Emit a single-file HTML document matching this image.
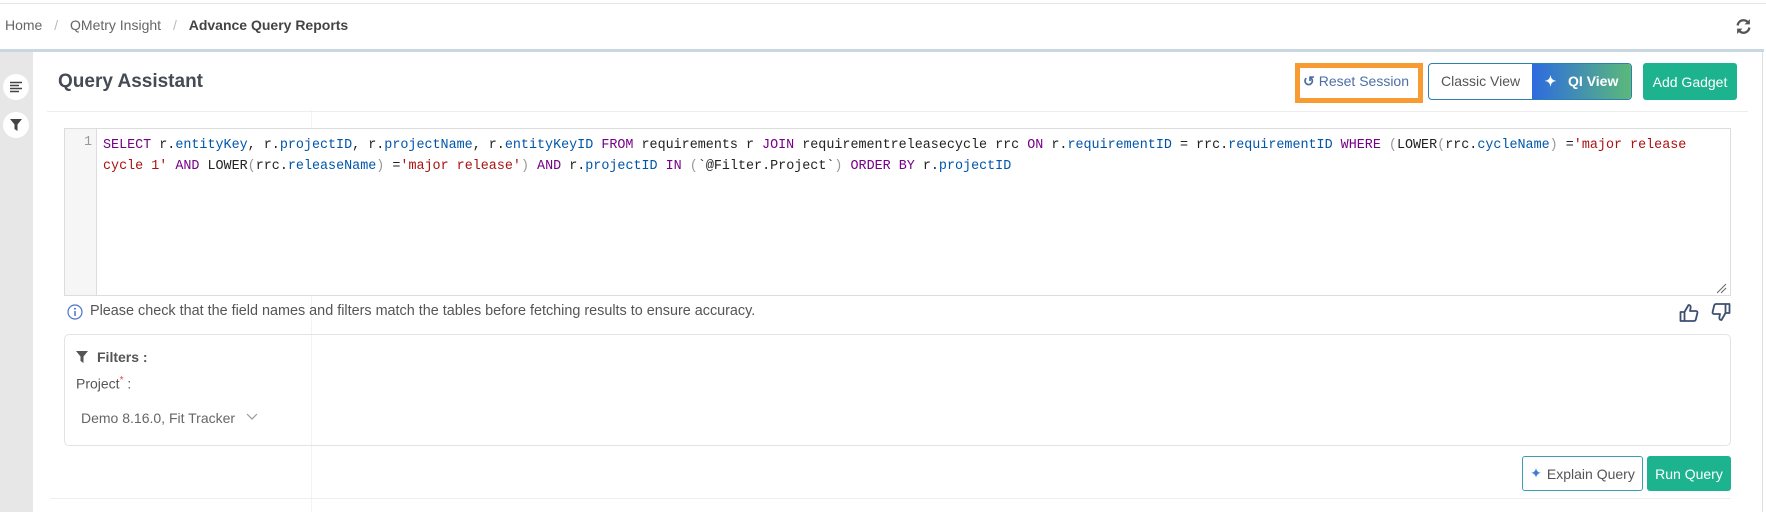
<!DOCTYPE html>
<html><head><meta charset="utf-8"><style>
*{box-sizing:border-box;margin:0;padding:0}
body{width:1766px;height:512px;overflow:hidden;background:#fff;font-family:"Liberation Sans",sans-serif;position:relative;color:#555}
.a{position:absolute;white-space:nowrap}
.mono{font-family:"Liberation Mono",monospace;font-size:13.4px;color:#222}
.k{color:#708}.v{color:#05a}.s{color:#a11}.b{color:#999}
.btn{position:absolute;display:flex;align-items:center;justify-content:center;font-size:14px;border-radius:3px}
</style></head><body>
<div class="a" style="left:0;top:3px;width:1766px;height:1px;background:#e6e6e6"></div>
<div class="a" style="left:5px;top:17px;font-size:14px;color:#666">Home <span style="color:#bbb;margin:0 8px">/</span> QMetry Insight <span style="color:#bbb;margin:0 8px">/</span> <b style="color:#444">Advance Query Reports</b></div>
<svg class="a" style="left:1735px;top:18px" width="17" height="17" viewBox="0 0 16 16"><path d="M2.5 7a5.5 5.5 0 0 1 10-2.5M13.5 9a5.5 5.5 0 0 1-10 2.5" fill="none" stroke="#555" stroke-width="2.2"/><path d="M14 1v5h-5zM2 15v-5h5z" fill="#555"/></svg>
<div class="a" style="left:0;top:49px;width:1764px;height:3px;background:#c9d7e1"></div>
<div class="a" style="left:0;top:52px;width:33px;height:460px;background:#e7e7e7"></div>
<div class="a" style="left:1762px;top:52px;width:1px;height:460px;background:#ddd"></div>
<div class="a" style="left:3px;top:74px;width:26px;height:26px;border-radius:50%;background:#fff"></div>
<svg class="a" style="left:10px;top:81px" width="12" height="12" viewBox="0 0 12 12"><path d="M0 1.5h12M0 4.5h9M0 7.5h12M0 10.5h9" stroke="#444" stroke-width="1.6"/></svg>
<div class="a" style="left:3px;top:112px;width:26px;height:26px;border-radius:50%;background:#fff"></div>
<svg class="a" style="left:10px;top:119px" width="12" height="12" viewBox="0 0 12 12"><path d="M0 0h12L7.5 5.5V12L4.5 10V5.5z" fill="#444"/></svg>
<div class="a" style="left:311px;top:110px;width:1px;height:402px;background:#f3f3f3"></div>
<div class="a" style="left:58px;top:71px;font-size:19px;font-weight:bold;color:#454b54">Query Assistant</div>
<div class="a" style="left:47px;top:111px;width:1701px;height:1px;background:#eee"></div>
<div class="a" style="left:1295px;top:63px;width:128px;height:40px;border:5px solid #f79b32"></div>
<div class="a" style="left:1303px;top:73px;font-size:14px;color:#4d6fa8"><span style="font-weight:bold;margin-right:4px">↺</span>Reset Session</div>
<div class="a" style="left:1428px;top:63px;width:204px;height:37px;border:1px solid #2f7fb0;border-radius:4px"></div>
<div class="a" style="left:1441px;top:73px;font-size:14px;color:#555">Classic View</div>
<div class="btn" style="left:1532px;top:64px;width:99px;height:35px;background:linear-gradient(90deg,#2d6be0,#5bb97a);color:#fff;font-weight:bold;border-radius:0 3px 3px 0">✦&nbsp;&nbsp; QI View</div>
<div class="btn" style="left:1643px;top:63px;width:94px;height:37px;background:#1db38f;color:#fff">Add Gadget</div>
<div class="a" style="left:64px;top:128px;width:1667px;height:168px;border:1px solid #ddd;background:#fff"></div>
<div class="a" style="left:65px;top:129px;width:32px;height:166px;background:#f6f6f6;border-right:1px solid #ddd"></div>
<div class="a mono" style="left:84px;top:135px;color:#999">1</div>
<div class="a mono" style="left:103px;top:135px;line-height:21px"><span class="k">SELECT</span> r.<span class="v">entityKey</span>, r.<span class="v">projectID</span>, r.<span class="v">projectName</span>, r.<span class="v">entityKeyID</span> <span class="k">FROM</span> requirements r <span class="k">JOIN</span> requirementreleasecycle rrc <span class="k">ON</span> r.<span class="v">requirementID</span> = rrc.<span class="v">requirementID</span> <span class="k">WHERE</span> <span class="b">(</span>LOWER<span class="b">(</span>rrc.<span class="v">cycleName</span><span class="b">)</span> =<span class="s">'major release</span><br><span class="s">cycle 1'</span> <span class="k">AND</span> LOWER<span class="b">(</span>rrc.<span class="v">releaseName</span><span class="b">)</span> =<span class="s">'major release'</span><span class="b">)</span> <span class="k">AND</span> r.<span class="v">projectID</span> <span class="k">IN</span> <span class="b">(</span>`@Filter.Project`<span class="b">)</span> <span class="k">ORDER BY</span> r.<span class="v">projectID</span></div>
<svg class="a" style="left:1716px;top:283px" width="11" height="11"><path d="M1 10L10 1M5 10L10 5" stroke="#666" stroke-width="1"/></svg>
<svg class="a" style="left:67px;top:304px" width="16" height="16" viewBox="0 0 16 16"><circle cx="8" cy="8" r="7" fill="none" stroke="#4c74c9" stroke-width="1.2"/><circle cx="8" cy="4.8" r="1" fill="#4c74c9"/><path d="M8 7v5" stroke="#4c74c9" stroke-width="1.5"/></svg>
<div class="a" style="left:90px;top:303px;font-size:14.4px;color:#555">Please check that the field names and filters match the tables before fetching results to ensure accuracy.</div>
<svg class="a" style="left:1679px;top:303px" width="20" height="20" viewBox="0 0 20 20"><path d="M1.5 9h4v9h-4zM5.5 9l4-7c2 0 2.5 1.5 2 3.5L11 8h6c1 0 1.7 1 1.4 2l-1.6 6.5c-.3 1-1 1.5-2 1.5H5.5" fill="none" stroke="#3c4f70" stroke-width="1.8" stroke-linejoin="round"/></svg>
<svg class="a" style="left:1711px;top:302px" width="20" height="20" viewBox="0 0 20 20"><path d="M14.5 11h4V2h-4zM14.5 11l-4 7c-2 0-2.5-1.5-2-3.5L9 12H3c-1 0-1.7-1-1.4-2l1.6-6.5c.3-1 1-1.5 2-1.5h9.3" fill="none" stroke="#3c4f70" stroke-width="1.8" stroke-linejoin="round"/></svg>
<div class="a" style="left:64px;top:334px;width:1667px;height:112px;border:1px solid #e3e3e3;border-radius:5px"></div>
<svg class="a" style="left:76px;top:351px" width="12" height="12" viewBox="0 0 12 12"><path d="M0 0h12L7.5 5.5V12L4.5 10V5.5z" fill="#555"/></svg>
<div class="a" style="left:97px;top:349px;font-size:14px;font-weight:bold;color:#555">Filters :</div>
<div class="a" style="left:76px;top:375px;font-size:14px;color:#555">Project<sup style="color:#e44;font-size:10px">*</sup> :</div>
<div class="a" style="left:81px;top:410px;font-size:14px;color:#666">Demo 8.16.0, Fit Tracker</div>
<svg class="a" style="left:246px;top:413px" width="12" height="8"><path d="M1 1l5 5 5-5" fill="none" stroke="#999" stroke-width="1.2"/></svg>
<div class="btn" style="left:1522px;top:456px;width:121px;height:35px;border:1px solid #3a9fb0;color:#555;background:#fff"><span style="color:#3a7fd0;margin-right:5px">✦</span>Explain Query</div>
<div class="btn" style="left:1647px;top:456px;width:84px;height:35px;background:#1db38f;color:#fff">Run Query</div>
<div class="a" style="left:50px;top:498px;width:1681px;height:1px;background:#eee"></div>
</body></html>
